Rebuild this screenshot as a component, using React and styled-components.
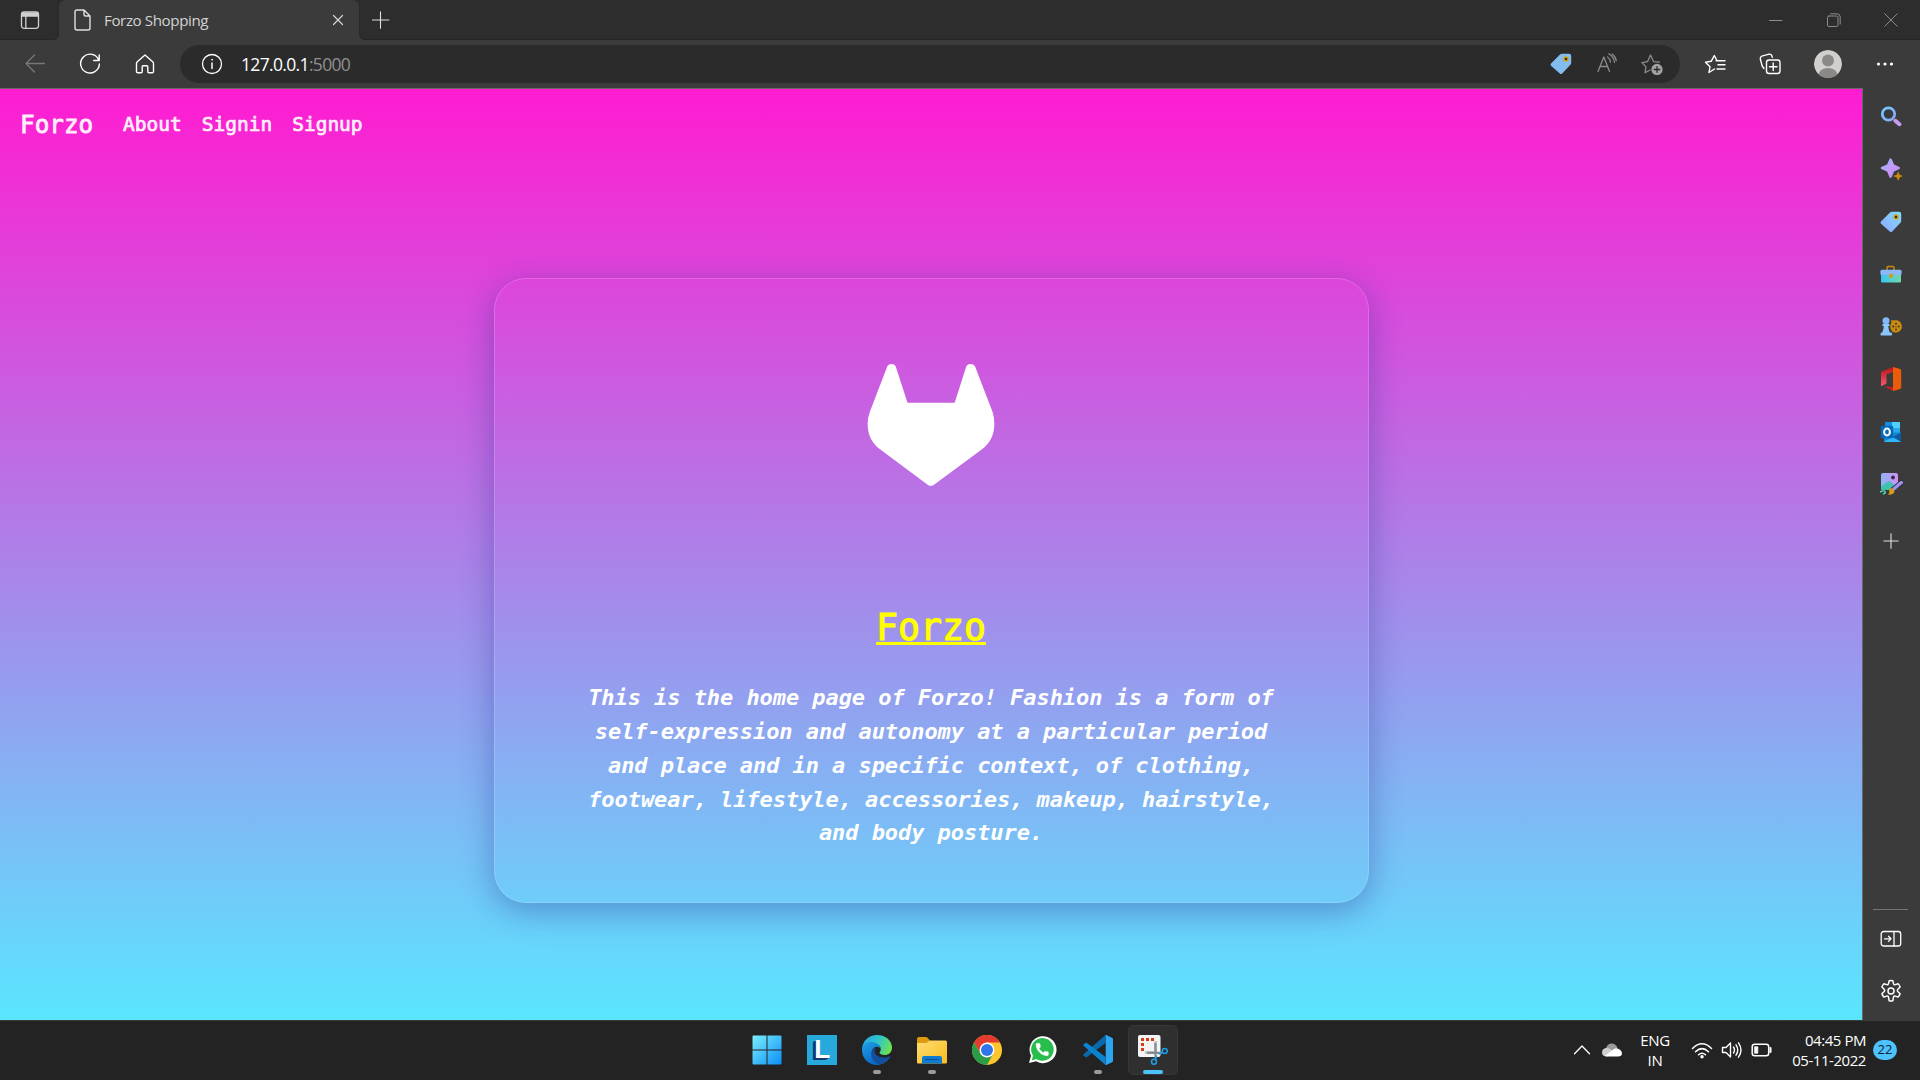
import React from "react";
import styled, { createGlobalStyle, css } from "styled-components";

const Global = createGlobalStyle`
  *, *::before, *::after { box-sizing: border-box; }
  html, body { margin: 0; padding: 0; background: #202020; overflow: hidden; }
  svg { display: block; flex: none; }
`;

const ui = css`font-family: "Open Sans", "Noto Sans", sans-serif;`;
const mono = css`font-family: "DejaVu Sans Mono", "Liberation Mono", monospace;`;

const Screen = styled.div`
  width: 1920px;
  height: 1080px;
  display: flex;
  flex-direction: column;
  overflow: hidden;
  ${ui}
`;

/* ---------- browser chrome ---------- */
const TabStrip = styled.header`
  height: 40px;
  display: flex;
  background: #3b3b3b;
`;
const StripStart = styled.div`
  width: 59px;
  display: flex;
  align-items: center;
  padding-left: 20px;
  background: #2d2d2d;
  border-bottom: 1px solid #252525;
  border-right: 1px solid #292929;
  border-bottom-right-radius: 6px;
`;
const TabSlot = styled.div`
  width: 300px;
  background: #2d2d2d;
`;
const Tab = styled.div`
  height: 40px;
  display: flex;
  align-items: center;
  padding: 0 15px 0 15px;
  background: #3b3b3b;
  border-radius: 7px 7px 0 0;
`;
const TabTitle = styled.span`
  flex: 1;
  margin-left: 13px;
  margin-top: -1px;
  color: #d2d2d2;
  font-size: 15.2px;
  line-height: 20px;
  letter-spacing: -0.43px;
  white-space: nowrap;
`;
const StripEnd = styled.div`
  flex: 1;
  display: flex;
  align-items: center;
  justify-content: space-between;
  padding-left: 12px;
  background: #2d2d2d;
  border-bottom: 1px solid #252525;
  border-left: 1px solid #292929;
  border-bottom-left-radius: 6px;
`;
const WindowButtons = styled.div`
  display: flex;
`;
const WindowButton = styled.div`
  width: 57.5px;
  display: flex;
  justify-content: center;
`;
const Toolbar = styled.div`
  height: 48px;
  display: flex;
  align-items: center;
  padding-left: 7px;
  background: #3b3b3b;
`;
const ToolCell = styled.div`
  width: ${(p) => p.$w || 55}px;
  height: 38px;
  display: flex;
  align-items: center;
  justify-content: center;
`;
const AddressBar = styled.div`
  width: 1500px;
  height: 38px;
  margin-left: 8px;
  padding: 0 6px 0 21px;
  display: flex;
  align-items: center;
  border-radius: 19px;
  background: #2b2b2b;
`;
const Url = styled.span`
  flex: 1;
  margin-left: 18px;
  margin-top: -1px;
  font-size: 17.5px;
  line-height: 24px;
  letter-spacing: -0.66px;
  color: #fff;
  span { color: #8f8f8f; }
`;

/* ---------- body ---------- */
const Body = styled.div`
  height: 932px;
  display: flex;
  background: #3b3b3b;
`;
const Page = styled.main`
  width: 1863px;
  border-top: 1px solid #686868;
  border-right: 1px solid #686868;
  background: linear-gradient(180deg, #ff1cd1 0%, #5ae6ff 100%);
  display: flex;
  flex-direction: column;
  align-items: center;
`;
const Nav = styled.nav`
  align-self: stretch;
  height: 70px;
  padding-left: 20px;
  padding-top: 1px;
  display: flex;
  align-items: center;
  ${mono}
`;
const Brand = styled.a`
  width: 103px;
  color: #fff;
  opacity: 0.93;
  font-size: 24.3px;
  line-height: 38px;
  -webkit-text-stroke: 0.8px #fff;
`;
const NavLink = styled.a`
  margin-right: 20px;
  padding-top: 1px;
  color: #fff;
  opacity: 0.93;
  font-size: 19.5px;
  line-height: 30px;
  -webkit-text-stroke: 0.7px #fff;
`;
const Card = styled.section`
  width: 875px;
  height: 625px;
  margin-top: 119px;
  padding-top: 76px;
  display: flex;
  flex-direction: column;
  align-items: center;
  border: 1px solid rgba(255, 255, 255, 0.18);
  border-radius: 32px;
  box-shadow: 0 8px 32px 0 rgba(31, 38, 135, 0.37);
`;
const Heading = styled.h1`
  margin: 105px 0 0;
  color: #ff0;
  font-weight: 400;
  font-size: 36.5px;
  line-height: 56px;
  ${mono}
  -webkit-text-stroke: 1.1px #ff0;
  text-decoration: underline;
  text-decoration-thickness: 2.5px;
  text-underline-offset: 2px;
  text-decoration-skip-ink: none;
`;
const Blurb = styled.p`
  margin: 25px 0 0;
  color: #fff;
  text-align: center;
  font-size: 22px;
  letter-spacing: -0.06px;
  font-style: italic;
  font-weight: 700;
  line-height: 33.85px;
  white-space: pre-line;
  ${mono}
`;

const Sidebar = styled.aside`
  flex: 1;
  padding: 2.5px 2px 3px 0;
  display: flex;
  flex-direction: column;
  align-items: center;
`;
const SideCell = styled.div`
  width: 100%;
  height: ${(p) => p.$h || 52.5}px;
  display: flex;
  align-items: center;
  justify-content: center;
`;
const SideRule = styled.hr`
  width: 35px;
  height: 1px;
  border: 0;
  background: #747474;
  margin: auto 0 3px;
`;

/* ---------- taskbar ---------- */
const Taskbar = styled.footer`
  height: 60px;
  display: flex;
  justify-content: space-between;
  background: #222322;
  border-top: 1px solid #3a3b3b;
`;
const Dock = styled.div`
  display: flex;
  padding-left: 739.5px;
`;
const DockCell = styled.div`
  width: 55.1px;
  display: flex;
  flex-direction: column;
  align-items: center;
`;
const DockTile = styled.div`
  width: 50px;
  height: 50px;
  margin-top: 4px;
  padding-top: 9px;
  display: flex;
  flex-direction: column;
  align-items: center;
  border-radius: 5px;
  border: 1px solid ${(p) => (p.$active ? "#363636" : "transparent")};
  background: ${(p) => (p.$active ? "#2f2f2f" : "transparent")};
`;
const Indicator = styled.span`
  width: ${(p) => (p.$active ? 20 : 8)}px;
  height: 4px;
  margin-top: 5px;
  border-radius: 2px;
  background: ${(p) => (p.$active ? "#4cc2ff" : "#9b9b9b")};
`;
const Tray = styled.div`
  display: flex;
  align-items: center;
  padding-right: 23px;
  padding-bottom: 1px;
  color: #fff;
`;
const TrayCell = styled.div`
  width: ${(p) => p.$w}px;
  display: flex;
  justify-content: center;
`;
const TrayText = styled.div`
  width: ${(p) => p.$w}px;
  text-align: ${(p) => p.$align || "center"};
  font-size: 15px;
  line-height: 20px;
  letter-spacing: ${(p) => p.$ls || -0.4}px;
  white-space: pre-line;
`;
const Badge = styled.span`
  width: 24px;
  height: 20px;
  margin-left: 7px;
  border-radius: 10px;
  background: #4cc2ff;
  color: #10222c;
  font-size: 13px;
  line-height: 19px;
  text-align: center;
`;

/* ---------- icons ---------- */
const Line = ({ w = 20, h, box, c = "#fff", sw = 1.3, children }) => (
  <svg width={w} height={h || w} viewBox={box || `0 0 ${w} ${h || w}`} fill="none" stroke={c}
    strokeWidth={sw} strokeLinecap="round" strokeLinejoin="round">{children}</svg>
);

const PriceTag = ({ id, light }) => (
  <svg width="22" height="22" viewBox="0 0 22 22">
    <defs>
      <linearGradient id={id} x1="1" y1="0" x2="0" y2="1">
        <stop offset="0" stopColor={light ? "#83bdf0" : "#7fdcff"} />
        <stop offset="1" stopColor={light ? "#83bdf0" : "#8ea6fb"} />
      </linearGradient>
    </defs>
    <path d="M12 .8h7q2.2 0 2.2 2.200v7q0 1-.8 1.800l-8.200 8.600q-1.200 1.200-2.400 0L1 12.700q-1-1.200 0-2.300L10 1.600q1-.8 2-.8z" fill={`url(#${id})`} />
    <circle cx="16" cy="6" r="2.700" fill="#dca006" />
    <circle cx="16" cy="6" r="1.300" fill="#332d1c" />
  </svg>
);

const Fox = () => (
  <svg width="142" height="140" viewBox="0 0 426 420">
    <path fill="#fff" d="M82 34Q86 27 94 27Q104 27 107 34L142.500 143.500H284L319 34Q323 27 331 27Q341 27 345 34L398 172Q403 188 403 207C403 240 390 264 366 283L222 389Q212 396 203 389L60 283C36 264 23 240 23 207Q23 188 29 172Z" />
  </svg>
);

const SearchIcon = () => (
  <svg width="22" height="22" viewBox="0 0 22 22">
    <defs>
      <linearGradient id="ring" x1="0" y1="0" x2="1" y2="1"><stop stopColor="#6fd0ff" /><stop offset="1" stopColor="#8fa6ff" /></linearGradient>
    </defs>
    <circle cx="8.500" cy="8" r="6.200" fill="none" stroke="url(#ring)" strokeWidth="2.700" />
    <path d="M15.400 14.800l4 3.400" stroke="#c79bf2" strokeWidth="4" strokeLinecap="round" />
    <path d="M13 12.500l1.500 1.500" stroke="#8f8fa8" strokeWidth="1.800" />
  </svg>
);
const SparkIcon = () => (
  <svg width="24" height="24" viewBox="0 -1 22 22">
    <defs>
      <linearGradient id="spark" x1="0" y1="0" x2="1" y2="1"><stop stopColor="#7fc0ff" /><stop offset=".5" stopColor="#c79bf8" /><stop offset="1" stopColor="#a98bf0" /></linearGradient>
    </defs>
    <path d="M9.600.8q1-1.400 2 0l2.200 5 5 2.300q1 .9 0 1.800l-5 2.300-2.200 5.400q-1 1.400-2 0l-2.200-5.400L2 9.900q-1-.9 0-1.800l5.400-2.300z" fill="url(#spark)" />
    <path d="M17.600 12l1.300 3.300 3.100 1.200-3.100 1.300-1.300 3.200-1.300-3.200-3.300-1.300 3.300-1.200z" fill="#c98d08" />
  </svg>
);
const ToolboxIcon = () => (
  <svg width="22" height="22" viewBox="0 -1 22 22">
    <defs><linearGradient id="tbx" x1="0" x2="1"><stop stopColor="#38c6f4" /><stop offset="1" stopColor="#6fd8a8" /></linearGradient></defs>
    <path d="M7 6V4Q7 2.500 8.500 2.500h4Q14 2.500 14 4V6" fill="none" stroke="#c98d08" strokeWidth="1.500" />
    <rect x="1" y="8" width="20" height="10.500" rx="1.200" fill="url(#tbx)" />
    <rect x=".4" y="5.800" width="21.200" height="5.200" rx="1.500" fill="#8bb8f8" />
    <rect x="9.200" y="9.800" width="3.600" height="4" rx="1" fill="#d89b10" />
  </svg>
);
const GamesIcon = () => (
  <svg width="22" height="22" viewBox="0 -.8 22 22">
    <path d="M11 3.500h6q4.500 1 4.500 6t-5 6h-4z" fill="#c58a12" />
    <ellipse cx="16" cy="10" rx="5.800" ry="5.600" fill="#c88d10" />
    <g fill="#4a3820"><circle cx="16" cy="7" r="1" /><circle cx="13.200" cy="9.800" r="1" /><circle cx="18.800" cy="9.800" r="1" /><circle cx="16" cy="12.800" r="1" /><circle cx="16" cy="9.900" r=".7" /></g>
    <circle cx="6" cy="4" r="3.500" fill="#82b8f8" />
    <path d="M2.500 7.300h7v2h-1.200q0 3.500 1.500 6.500h1.700q1.200 3-.2 3H1.200q-1.200 0-.6-2 .2-1 1.600-1 1.700-3 1.500-6.500H2.500z" fill="#8cc5fb" />
  </svg>
);
const OfficeIcon = () => (
  <svg width="22" height="24" viewBox="0 0 22 24">
    <defs><linearGradient id="ofc" y1="0" y2="1" x1="0" x2="0"><stop stopColor="#b81616" /><stop offset="1" stopColor="#f25a73" /></linearGradient></defs>
    <path d="M13 0l6.500 1.800q1.700.5 1.700 2v16.400q0 1.500-1.700 2L13 24z" fill="#ea5c0a" />
    <path d="M13 0v5L6.500 7.200v8.300q0 1-1 1.500L1.800 19q-.8.300-.8-.8V6.500Q1 4.800 2.600 4z" fill="url(#ofc)" />
    <path d="M5.500 19.200L13 20.200V24l-7.500-4z" fill="#d11e24" />
  </svg>
);
const OutlookIcon = () => (
  <svg width="22" height="22" viewBox="0 0 22 22">
    <rect x="5" y="1" width="15" height="13" rx="1" fill="#1490df" />
    <rect x="12" y="1" width="8" height="6" fill="#50d0fb" />
    <rect x="12" y="7" width="8" height="5" fill="#28a8ea" />
    <path d="M4 11.500h17V20q0 1-1 1H5q-1 0-1-1z" fill="#1488d4" />
    <path d="M21 11.500v9L13 16z" fill="#0a5a9c" /><path d="M4 20.500l9-4 8 4.500H5z" fill="#31b8f5" />
    <rect x=".8" y="4.800" width="12.400" height="12.400" rx="1.200" fill="#0869bb" />
    <ellipse cx="7" cy="11" rx="2.900" ry="3.400" fill="none" stroke="#fff" strokeWidth="2" />
  </svg>
);
const PaintIcon = () => (
  <svg width="24" height="24" viewBox="0 0 24 24">
    <defs><linearGradient id="pnt" x1="0" x2="1"><stop stopColor="#8db3f9" /><stop offset="1" stopColor="#d18ff2" /></linearGradient></defs>
    <rect x="2" y="1" width="17" height="17" rx="2" fill="url(#pnt)" />
    <path d="M2 14.500l7-5q1-.7 2 0l7 6-3 2.500H3q-1 0-1-1z" fill="#3ec3ae" />
    <circle cx="14" cy="5.500" r="1.900" fill="#342d45" />
    <path d="M22.500 10.500L14 17.500" stroke="#292642" strokeWidth="5" strokeLinecap="round" />
    <path d="M22.300 10.500L15 16.800" stroke="#9a94ef" strokeWidth="3.400" strokeLinecap="round" />
    <path d="M10 17q4-2 5.500 1.500Q15.500 23 9 22.800q2-1.800 1-5.800z" fill="#d99b1c" />
    <path d="M1 20q4-2 5-.4t-2 2.400" fill="none" stroke="#57d9b6" strokeWidth="1.500" />
  </svg>
);

const WindowsIcon = () => (
  <svg width="30" height="30" viewBox="0 0 30 30">
    <defs><linearGradient id="win" x1="0" y1="0" x2="1" y2="1"><stop stopColor="#7ceeff" /><stop offset="1" stopColor="#0a8ff5" /></linearGradient></defs>
    <path d="M.5 1.500q0-1 1-1h13v14H.5zM15.500.5h13q1 0 1 1v13h-14zM.5 15.500h14v14h-13q-1 0-1-1zM15.500 15.500h14v13q0 1-1 1h-13z" fill="url(#win)" />
  </svg>
);
const LightshotTile = styled.div`
  width: 30px;
  height: 30px;
  background: #27aadb;
  color: #fff;
  font: 700 26px/28px "Liberation Sans", sans-serif;
  text-align: center;
  text-shadow: -1px 1px 0 #123a72, -2px 1px 0 #123a72, -3px 2px 0 #123a72;
`;
const EdgeIcon = () => (
  <svg width="30" height="30" viewBox="0 0 30 30">
    <defs>
      <linearGradient id="e1" x1="0" y1=".3" x2="1" y2=".6"><stop stopColor="#2aa5e8" /><stop offset=".5" stopColor="#2fc5c8" /><stop offset="1" stopColor="#70e34e" /></linearGradient>
      <linearGradient id="e2" x1="0" y1="0" x2=".5" y2="1"><stop stopColor="#1fa1e8" /><stop offset="1" stopColor="#0b68c4" /></linearGradient>
    </defs>
    <path d="M0 14C1 5 7 0 15 0c9 0 15 6 15 12.500 0 5-3.500 7.500-7.500 7.500-3 0-5-1-5-2.200 0-.9 1.300-1.600 1.300-3.800 0-3-3-5.500-7-5.500S2 11 0 14z" fill="url(#e1)" />
    <path d="M0 15C0 9.500 4.500 7 9.500 7c5 0 9.500 3.500 9.300 7.500-.8-2-2.300-2.700-3.800-2.700-4 0-6 4-5 8.200S14.500 28 19 29.300Q17 30 15 30C6.500 30 0 23.500 0 15z" fill="url(#e2)" />
    <path d="M11.500 13.500C8 17 8.500 24 14 27.700q3.500 2.300 7.500.8 4.500-2 6.700-6.300.3-1.200-.9-.8-3 1.500-6.600 1-7.200-1-8-5.400-.2-1.800.8-3.900z" fill="#124f9f" />
  </svg>
);
const FolderIcon = () => (
  <svg width="30" height="30" viewBox="0 0 30 30">
    <defs><linearGradient id="fld" x1="0" y1="0" x2="1" y2="1"><stop stopColor="#ffdd73" /><stop offset="1" stopColor="#f9bd1d" /></linearGradient></defs>
    <path d="M0 4q0-2 2-2h7q1 0 1.800 1L13 5.500V10H0z" fill="#e09a10" />
    <path d="M0 8h9.500L13 5.500h15.500Q30 5.500 30 7v20.500q0 1-1 1H1q-1 0-1-1z" fill="url(#fld)" />
    <path d="M5 28.500V23q0-2 2-2h16q2 0 2 2v5.500z" fill="#0f7bd0" />
    <path d="M9 24.500h12" stroke="#0a4e93" strokeWidth="1.200" strokeLinecap="round" />
  </svg>
);
const ChromeIcon = () => (
  <svg width="30" height="30" viewBox="0 0 30 30">
    <circle cx="15" cy="15" r="15" fill="#fcc62c" />
    <path d="M2 7.500l6.500 11.300L15 15V7.500h13A15 15 0 0 0 2 7.500z" fill="#e33b2e" />
    <path d="M2 7.500l6.600 11.300L15 15l6 4L15 30A15 15 0 0 1 2 7.500z" fill="#2b9d48" />
    <circle cx="15" cy="15" r="7.500" fill="#fff" /><circle cx="15" cy="15" r="6" fill="#2e76e8" />
  </svg>
);
const WhatsAppIcon = () => (
  <svg width="30" height="30" viewBox="1 0 30 30">
    <path d="M2 28l2-7.200A13.500 13.500 0 1 1 9 26.200z" fill="#fff" />
    <path d="M4.700 25.400l1.300-4.700A11.300 11.300 0 1 1 9.400 24z" fill="#28bd4d" />
    <path transform="translate(7.200 6.500) scale(.67)" fill="#fff" stroke="#fff" d="M20.010 15.380c-1.230 0-2.420-.2-3.530-.56a.977.977 0 0 0-1.010.24l-1.570 1.970c-2.830-1.350-5.480-3.900-6.890-6.830l1.950-1.660c.27-.28.35-.67.24-1.020-.37-1.110-.56-2.300-.56-3.530 0-.54-.45-.99-.99-.99H4.190C3.650 3 3 3.240 3 3.990 3 13.280 10.730 21 20.010 21c.71 0 .99-.63.99-1.180v-3.450c0-.54-.45-.99-.99-.99z" />
  </svg>
);
const CodeIcon = () => (
  <svg width="30" height="30" viewBox="0 0 30 30">
    <path d="M.5 20.500L2.300 22q.8.600 1.700 0L22.500 8V0L.5 19.300q-.7.600 0 1.200z" fill="#0869ad" />
    <path d="M.5 9.500L2.300 8q.8-.6 1.700 0l18.500 14v8L.5 10.800q-.7-.6 0-1.300z" fill="#0d83cf" />
    <path d="M22.500.3q.5-.4 1.300-.1l5.200 2.500q1 .5 1 1.600v21.400q0 1.100-1 1.600l-5.200 2.500q-.8.300-1.800-.3.700-.2.700-1.300V1.800q0-1-.7-1.300z" fill="#2ca5f2" />
  </svg>
);
const SnipIcon = () => (
  <svg width="30" height="30" viewBox="0 0 30 30">
    <rect x="0" y="0" width="22.500" height="22" rx="2" fill="#f4f4f4" />
    <g fill="#d83b12"><rect x="3" y="3" width="3" height="3" /><rect x="8" y="3" width="3" height="3" /><rect x="13" y="3" width="3" height="3" /><rect x="3" y="8" width="3" height="3" /><rect x="3" y="13" width="3" height="3" /></g>
    <path d="M17.500 6v11M7 17.500h10" stroke="#c3c7ca" strokeWidth="3" />
    <path d="M17.500 8v15M9 17.800h15" stroke="#858d93" strokeWidth="2.200" />
    <circle cx="26.800" cy="16" r="2.500" fill="none" stroke="#1e9de6" strokeWidth="1.600" />
    <circle cx="16" cy="26.800" r="2.500" fill="none" stroke="#1e9de6" strokeWidth="1.600" />
    <path d="M24.500 17.500l-4 1.500M17.500 24.500l1-4" stroke="#1e9de6" strokeWidth="1.500" />
  </svg>
);

const sideIcons = [
  <SearchIcon />, <SparkIcon />, <PriceTag id="tagSide" />, <ToolboxIcon />,
  <GamesIcon />, <OfficeIcon />, <OutlookIcon />, <PaintIcon />,
];
const dockApps = [
  { icon: <WindowsIcon /> },
  { icon: <LightshotTile>L</LightshotTile> },
  { icon: <EdgeIcon />, running: true },
  { icon: <FolderIcon />, running: true },
  { icon: <ChromeIcon /> },
  { icon: <WhatsAppIcon /> },
  { icon: <CodeIcon />, running: true },
  { icon: <SnipIcon />, running: true, active: true },
];
const blurb = [
  "This is the home page of Forzo! Fashion is a form of",
  "self-expression and autonomy at a particular period",
  "and place and in a specific context, of clothing,",
  "footwear, lifestyle, accessories, makeup, hairstyle,",
  "and body posture.",
].join("\n");

export default function App() {
  return (
    <Screen>
      <Global />
      <TabStrip>
        <StripStart>
          <Line c="#d0d0d0">
            <rect x="1.500" y="1.800" width="17" height="16.500" rx="2.500" />
            <path d="M5.800 6v12" /><path d="M2 4.500h16" strokeWidth="4.500" strokeLinecap="butt" />
          </Line>
        </StripStart>
        <TabSlot>
          <Tab>
            <Line w={17} h={22} c="#e0e0e0" sw={1.4}>
              <path d="M10 1H3Q1 1 1 3v16q0 2 2 2h11q2 0 2-2V7L10 1v4.500Q10 7 11.500 7H16" />
            </Line>
            <TabTitle>Forzo Shopping</TabTitle>
            <Line w={12} c="#d6d6d6" sw={1.2}><path d="M1.500 1.500l9 9M10.500 1.500l-9 9" /></Line>
          </Tab>
        </TabSlot>
        <StripEnd>
          <Line w={18} c="#e0e0e0" sw={1.1}><path d="M8.500 .8v16.400M.5 9h16.400" /></Line>
          <WindowButtons>
            <WindowButton><Line w={14} c="#8d8d8d" sw={1}><path d="M.5 7.500h12.500" /></Line></WindowButton>
            <WindowButton><Line w={14} c="#8d8d8d" sw={1}><rect x=".5" y="3" width="10.500" height="10.500" rx="1.500" /><path d="M3.500.8H10Q13.200.8 13.200 4v7" /></Line></WindowButton>
            <WindowButton><Line w={14} c="#8d8d8d" sw={1}><path d="M.8.8l12.400 12.400M13.200.8L.8 13.200" /></Line></WindowButton>
          </WindowButtons>
        </StripEnd>
      </TabStrip>

      <Toolbar>
        <ToolCell $w={56}><Line c="#777"><path d="M19.500 9.500H1M9.500 1L1 9.500 9.500 18" /></Line></ToolCell>
        <ToolCell $w={54}><Line w={22} sw={1.400}><path d="M19.800 7.200A9.400 9.400 0 1 0 20.400 11M20.200 2v5.500h-5.500" /></Line></ToolCell>
        <ToolCell $w={55}><Line sw={1.400}><path d="M10 1L2.300 7.800q-.8.700-.8 1.700v8q0 1.300 1.300 1.300h3.400q1 0 1-1v-5q0-1 1-1h3.600q1 0 1 1v5q0 1 1 1h3.400q1.300 0 1.300-1.300v-8q0-1-.8-1.700z" /></Line></ToolCell>
        <AddressBar>
          <Line w={22} sw={1.300}><circle cx="11" cy="11" r="9.500" /><path d="M11 10v5.500" strokeWidth="1.500" /><circle cx="11" cy="6.800" r=".4" strokeWidth="1" /></Line>
          <Url>127.0.0.1<span>:5000</span></Url>
          <ToolCell $w={45}><PriceTag id="tagBar" light /></ToolCell>
          <ToolCell $w={46}>
            <Line w={22} box="-1 0 22 22" c="#8c8c8c"><path d="M2 18.500L7.800 4 13.500 18.500M4 13.500h7.600M11.500 4q2.500 1.500 3 5M12.800.8q4.700 2.500 5.700 8.500M16.300 1q3 2.500 4 6.500" /></Line>
          </ToolCell>
          <ToolCell $w={45}>
            <Line w={24} h={22} c="#8c8c8c"><path d="M10 17L5 19.800l1-5.900L2 9.600l5.600-1L10.500 2l3 6.600 6 .6" /><circle cx="17" cy="16.500" r="5" fill="#a2a2a2" stroke="#a2a2a2" /><path d="M17 13.700v5.600M14.200 16.500h5.600" stroke="#2b2b2b" /></Line>
          </ToolCell>
        </AddressBar>
        <ToolCell $w={70}>
          <Line w={22} h={20} sw={1.400}><path d="M12 6.700h9M14 10.800h7M13 15h8M10.500 15L5 18.500l1-5.700L1.500 8.200l5.700-.9L10.300 1.500l2.600 5" /></Line>
        </ToolCell>
        <ToolCell $w={40}>
          <Line w={22} sw={1.400}><rect x="7.500" y="7" width="13.500" height="13.500" rx="2.500" /><path d="M14.200 10v7.500M10.500 13.800H18M5 15.500L3.200 13 1.300 6Q1 4 2.800 3.200L10 1.200q2-.4 2.800 1.400l.5 1.800" /></Line>
        </ToolCell>
        <ToolCell $w={76}>
          <svg width="28" height="28" viewBox="0 0 28 28">
            <defs><clipPath id="av"><circle cx="14" cy="14" r="14" /></clipPath></defs>
            <g clipPath="url(#av)"><circle cx="14" cy="14" r="14" fill="#d2d0ce" /><circle cx="14" cy="10.500" r="6" fill="#8b8886" /><ellipse cx="14" cy="25" rx="9.500" ry="7" fill="#8b8886" /></g>
          </svg>
        </ToolCell>
        <ToolCell $w={38}>
          <svg width="18" height="6" viewBox="0 0 18 6" fill="#fff"><circle cx="2.500" cy="3" r="1.600" /><circle cx="9" cy="3" r="1.600" /><circle cx="15.500" cy="3" r="1.600" /></svg>
        </ToolCell>
      </Toolbar>

      <Body>
        <Page>
          <Nav>
            <Brand>Forzo</Brand>
            <NavLink>About</NavLink>
            <NavLink>Signin</NavLink>
            <NavLink>Signup</NavLink>
          </Nav>
          <Card>
            <Fox />
            <Heading>Forzo</Heading>
            <Blurb>{blurb}</Blurb>
          </Card>
        </Page>
        <Sidebar>
          {sideIcons.map((icon, i) => <SideCell key={i}>{icon}</SideCell>)}
          <SideCell $h={60}><Line w={16} c="#e2e2e2" sw={1.100}><path d="M8 .8v14.400M.8 8h14.400" /></Line></SideCell>
          <SideRule />
          <SideCell $h={52}>
            <Line w={22} h={18} sw={1.300}><rect x="1.200" y="1.500" width="19.500" height="14.500" rx="2.500" /><path d="M14 1.500V16M4.500 8.800H11M8.500 6.200L11 8.800l-2.500 2.600" /></Line>
          </SideCell>
          <SideCell $h={52}>
            <Line w={24} box="0 0 24 24" sw={1.500}>
              <path d="M9.500 4.700L10.200 1.700q1.800-.5 3.600 0l.7 3q.3 1.300 1.700.9l2.900-.8q1.400 1.400 2 3.200l-2.300 2.200q-1.100 1.100 0 2.300l2.300 2.200q-.6 1.900-2 3.300l-2.900-.9q-1.400-.4-1.700 1l-.7 3.700q-1.800.5-3.600 0l-.7-3.700q-.3-1.400-1.700-1l-2.900.9q-1.400-1.400-2-3.300l2.300-2.200q1.100-1.200 0-2.300L2.900 8q.6-1.800 2-3.200l2.900.8q1.400.4 1.700-.9z" />
              <circle cx="12" cy="12" r="3" />
            </Line>
          </SideCell>
        </Sidebar>
      </Body>

      <Taskbar>
        <Dock>
          {dockApps.map((app, i) => (
            <DockCell key={i}>
              <DockTile $active={app.active}>
                {app.icon}
                {app.running && <Indicator $active={app.active} />}
              </DockTile>
            </DockCell>
          ))}
        </Dock>
        <Tray>
          <TrayCell $w={30}><Line w={18} h={12} sw={1.300}><path d="M1.500 9.800L9 2l7.500 7.800" /></Line></TrayCell>
          <TrayCell $w={30}>
            <svg width="20" height="14" viewBox="0 0 20 14">
              <path d="M4 7Q4 1 9.500.5 14 .5 15.500 5L10 9z" fill="#9b9b9b" />
              <path d="M0 9.500Q0 5 5 5q3 0 5.500 3L5 13.500Q0 13.500 0 9.500z" fill="#cfcfcf" />
              <path d="M3 12.800L12 6q3-2 6 .8 2 1.700 2 3.400 0 3.300-4 3.300H5q-1.500 0-2-.7z" fill="#fff" />
            </svg>
          </TrayCell>
          <TrayText $w={56} $ls={-0.300}>{"ENG\nIN"}</TrayText>
          <TrayCell $w={38}>
            <Line w={22} h={17} sw={1.500}><path d="M1.500 6.500q9.500-9.500 19 0M4.500 9.800q6.500-6.300 13 0M7.500 12.800q3.500-3 7 0" /><circle cx="11" cy="14.800" r="1" fill="#fff" /></Line>
          </TrayCell>
          <TrayCell $w={22}>
            <Line w={22} h={18} sw={1.400}><path d="M1.500 6.500H5L9.500 2v14L5 11.500H1.500zM12.500 6q2 3 0 6M15 3.800q3.500 5.200 0 10.400M17.500 1.800q5 7.200 0 14.400" /></Line>
          </TrayCell>
          <TrayCell $w={38}>
            <Line w={22} h={14} sw={1.500}><rect x="1.200" y="1.200" width="16.500" height="11.600" rx="2.500" /><rect x="3.800" y="3.800" width="3" height="6.400" fill="#fff" strokeWidth=".8" /><path d="M19.500 5v4" strokeWidth="2" /></Line>
          </TrayCell>
          <TrayText $w={85} $align="right" $ls={-0.450}>{"04:45 PM\n05-11-2022"}</TrayText>
          <Badge>22</Badge>
        </Tray>
      </Taskbar>
    </Screen>
  );
}
